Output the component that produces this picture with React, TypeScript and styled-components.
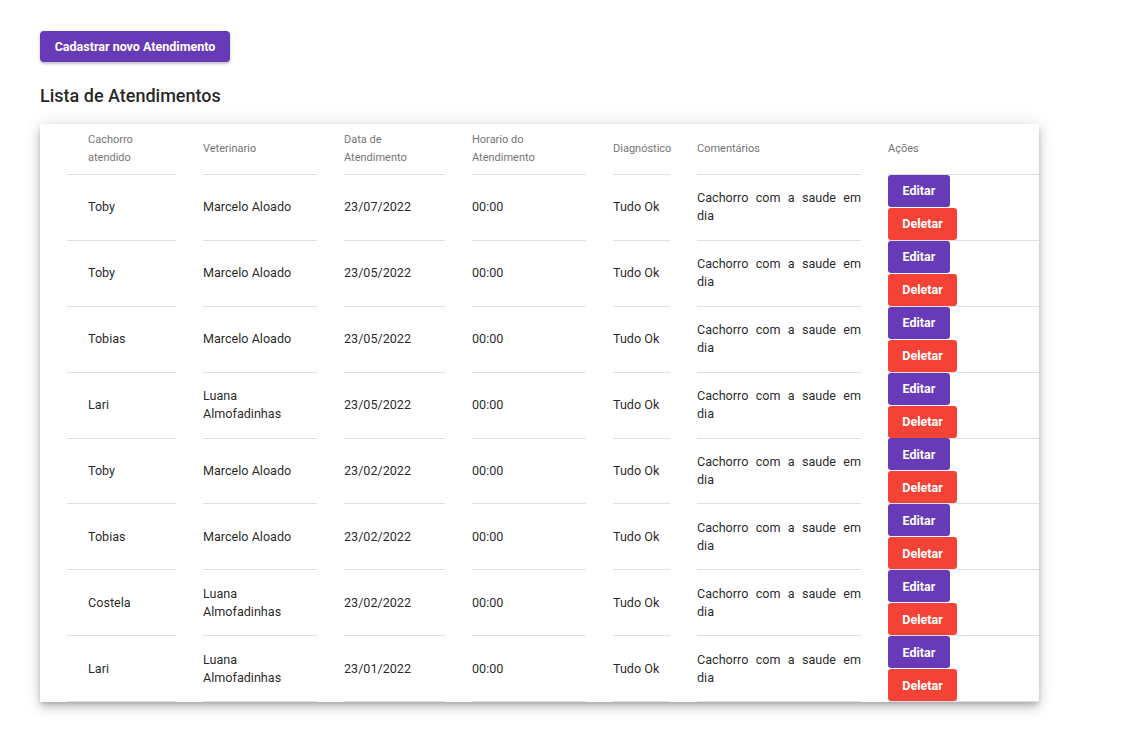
import React from "react";
import styled, {createGlobalStyle} from "styled-components";

const GlobalStyle = createGlobalStyle`
    body{
        margin: 0;
        background: #fff;
        font-family: Roboto, "Liberation Sans", sans-serif;
        color: rgba(0,0,0,0.87);
    }
`

const Page = styled.div`
    padding: 31px 40px 40px 40px;
`

const PrimaryButton = styled.button`
    height: 31px;
    width: 190px;
    padding: 0;
    border: none;
    border-radius: 4px;
    background: #673ab7;
    color: #fff;
    font-family: Roboto, "Liberation Sans", sans-serif;
    font-size: 12.5px;
    font-weight: 700;
    box-shadow: 0 2px 2px rgba(0,0,0,0.18), 0 1px 5px rgba(0,0,0,0.1);
    cursor: pointer;
`

const Title = styled.h2`
    margin: 22px 0 0 0;
    font-size: 18px;
    font-weight: 500;
    line-height: 24px;
    color: rgba(0,0,0,0.87);
`

const Card = styled.div`
    margin-top: 16px;
    width: 999px;
    background: #fff;
    box-shadow: 0 3px 5px -1px rgba(0,0,0,0.2), 0 6px 10px 0 rgba(0,0,0,0.14), 0 1px 18px 0 rgba(0,0,0,0.12);
`

const Grid = styled.div`
    display: grid;
    grid-template-columns: 109px 114px 101px 114px 57px 164px 1fr;
    column-gap: 27px;
    padding-left: 27px;
`

const Cell = styled.div<{ $head?: boolean; $first?: boolean }>`
    height: ${p => p.$head ? "50px" : "64.875px"};
    border-bottom: 1px solid #e0e0e0;
    display: flex;
    align-items: center;
    padding-left: ${p => p.$first ? "21px" : "0"};
    font-size: ${p => p.$head ? "11px" : "12.6px"};
    line-height: 18px;
    color: ${p => p.$head ? "#757575" : "rgba(0,0,0,0.87)"};
`

const Comment = styled.div`
    text-align: justify;
    width: 100%;
`

const Actions = styled.div`
    display: flex;
    flex-direction: column;
    align-items: flex-start;
    gap: 1px;
`

const ActionButton = styled.button<{ $danger?: boolean }>`
    height: 32px;
    width: ${p => p.$danger ? "69px" : "62px"};
    padding: 0;
    border: none;
    border-radius: 3px;
    background: ${p => p.$danger ? "#f44336" : "#673ab7"};
    color: #fff;
    font-family: Roboto, "Liberation Sans", sans-serif;
    font-size: 12.5px;
    font-weight: 700;
    cursor: pointer;
`

type Atendimento = {
    cachorro: string,
    veterinario: string,
    data: string,
    horario: string,
    diagnostico: string,
    comentario: string,
}

const atendimentos: Atendimento[] = [
    {cachorro: "Toby", veterinario: "Marcelo Aloado", data: "23/07/2022", horario: "00:00", diagnostico: "Tudo Ok", comentario: "Cachorro com a saude em dia"},
    {cachorro: "Toby", veterinario: "Marcelo Aloado", data: "23/05/2022", horario: "00:00", diagnostico: "Tudo Ok", comentario: "Cachorro com a saude em dia"},
    {cachorro: "Tobias", veterinario: "Marcelo Aloado", data: "23/05/2022", horario: "00:00", diagnostico: "Tudo Ok", comentario: "Cachorro com a saude em dia"},
    {cachorro: "Lari", veterinario: "Luana Almofadinhas", data: "23/05/2022", horario: "00:00", diagnostico: "Tudo Ok", comentario: "Cachorro com a saude em dia"},
    {cachorro: "Toby", veterinario: "Marcelo Aloado", data: "23/02/2022", horario: "00:00", diagnostico: "Tudo Ok", comentario: "Cachorro com a saude em dia"},
    {cachorro: "Tobias", veterinario: "Marcelo Aloado", data: "23/02/2022", horario: "00:00", diagnostico: "Tudo Ok", comentario: "Cachorro com a saude em dia"},
    {cachorro: "Costela", veterinario: "Luana Almofadinhas", data: "23/02/2022", horario: "00:00", diagnostico: "Tudo Ok", comentario: "Cachorro com a saude em dia"},
    {cachorro: "Lari", veterinario: "Luana Almofadinhas", data: "23/01/2022", horario: "00:00", diagnostico: "Tudo Ok", comentario: "Cachorro com a saude em dia"},
]

const headers = [
    "Cachorro atendido",
    "Veterinario",
    "Data de Atendimento",
    "Horario do Atendimento",
    "Diagnóstico",
    "Comentários",
    "Ações",
]

export default function App(){
    return(
        <Page>
            <GlobalStyle/>
            <PrimaryButton>Cadastrar novo Atendimento</PrimaryButton>
            <Title>Lista de Atendimentos</Title>
            <Card>
                <Grid>
                    {headers.map((h, i) => (
                        <Cell key={h} $head $first={i === 0}>{h}</Cell>
                    ))}
                    {atendimentos.map((a, i) => (
                        <React.Fragment key={i}>
                            <Cell $first>{a.cachorro}</Cell>
                            <Cell>{a.veterinario}</Cell>
                            <Cell>{a.data}</Cell>
                            <Cell>{a.horario}</Cell>
                            <Cell>{a.diagnostico}</Cell>
                            <Cell><Comment>{a.comentario}</Comment></Cell>
                            <Cell>
                                <Actions>
                                    <ActionButton>Editar</ActionButton>
                                    <ActionButton $danger>Deletar</ActionButton>
                                </Actions>
                            </Cell>
                        </React.Fragment>
                    ))}
                </Grid>
            </Card>
        </Page>
    )
}
